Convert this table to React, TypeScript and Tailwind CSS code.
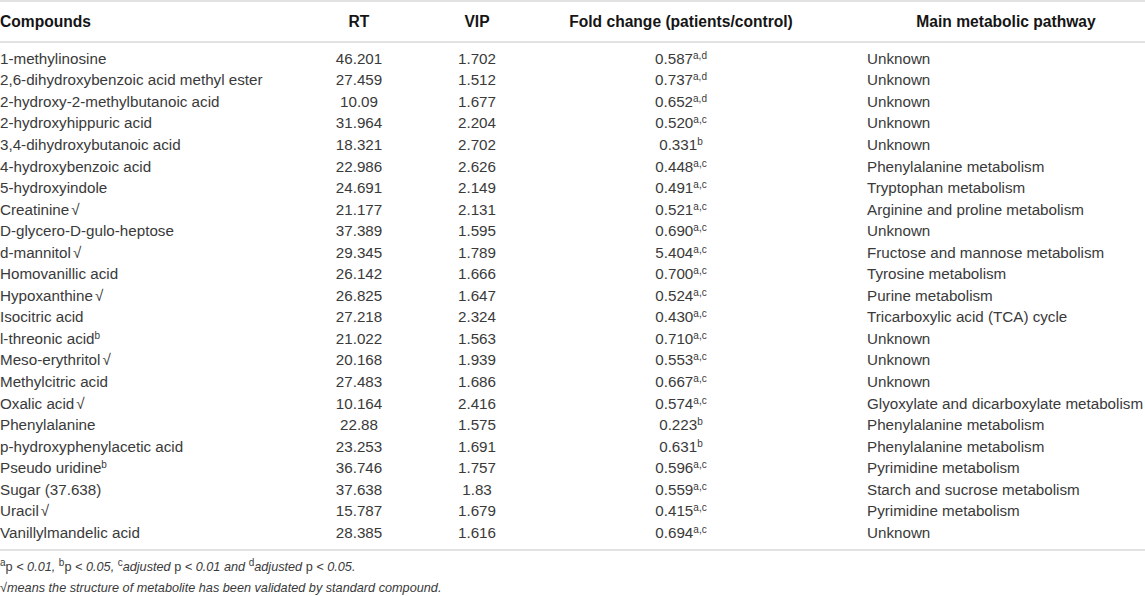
type Row = {
  name: string;
  mark?: "check" | "b";
  rt: string;
  vip: string;
  fold: string;
  sup: string;
  pathway: string;
};

const ROWS: Row[] = [
  { name: "1-methylinosine", rt: "46.201", vip: "1.702", fold: "0.587", sup: "a,d", pathway: "Unknown" },
  { name: "2,6-dihydroxybenzoic acid methyl ester", rt: "27.459", vip: "1.512", fold: "0.737", sup: "a,d", pathway: "Unknown" },
  { name: "2-hydroxy-2-methylbutanoic acid", rt: "10.09", vip: "1.677", fold: "0.652", sup: "a,d", pathway: "Unknown" },
  { name: "2-hydroxyhippuric acid", rt: "31.964", vip: "2.204", fold: "0.520", sup: "a,c", pathway: "Unknown" },
  { name: "3,4-dihydroxybutanoic acid", rt: "18.321", vip: "2.702", fold: "0.331", sup: "b", pathway: "Unknown" },
  { name: "4-hydroxybenzoic acid", rt: "22.986", vip: "2.626", fold: "0.448", sup: "a,c", pathway: "Phenylalanine metabolism" },
  { name: "5-hydroxyindole", rt: "24.691", vip: "2.149", fold: "0.491", sup: "a,c", pathway: "Tryptophan metabolism" },
  { name: "Creatinine", mark: "check", rt: "21.177", vip: "2.131", fold: "0.521", sup: "a,c", pathway: "Arginine and proline metabolism" },
  { name: "D-glycero-D-gulo-heptose", rt: "37.389", vip: "1.595", fold: "0.690", sup: "a,c", pathway: "Unknown" },
  { name: "d-mannitol", mark: "check", rt: "29.345", vip: "1.789", fold: "5.404", sup: "a,c", pathway: "Fructose and mannose metabolism" },
  { name: "Homovanillic acid", rt: "26.142", vip: "1.666", fold: "0.700", sup: "a,c", pathway: "Tyrosine metabolism" },
  { name: "Hypoxanthine", mark: "check", rt: "26.825", vip: "1.647", fold: "0.524", sup: "a,c", pathway: "Purine metabolism" },
  { name: "Isocitric acid", rt: "27.218", vip: "2.324", fold: "0.430", sup: "a,c", pathway: "Tricarboxylic acid (TCA) cycle" },
  { name: "l-threonic acid", mark: "b", rt: "21.022", vip: "1.563", fold: "0.710", sup: "a,c", pathway: "Unknown" },
  { name: "Meso-erythritol", mark: "check", rt: "20.168", vip: "1.939", fold: "0.553", sup: "a,c", pathway: "Unknown" },
  { name: "Methylcitric acid", rt: "27.483", vip: "1.686", fold: "0.667", sup: "a,c", pathway: "Unknown" },
  { name: "Oxalic acid", mark: "check", rt: "10.164", vip: "2.416", fold: "0.574", sup: "a,c", pathway: "Glyoxylate and dicarboxylate metabolism" },
  { name: "Phenylalanine", rt: "22.88", vip: "1.575", fold: "0.223", sup: "b", pathway: "Phenylalanine metabolism" },
  { name: "p-hydroxyphenylacetic acid", rt: "23.253", vip: "1.691", fold: "0.631", sup: "b", pathway: "Phenylalanine metabolism" },
  { name: "Pseudo uridine", mark: "b", rt: "36.746", vip: "1.757", fold: "0.596", sup: "a,c", pathway: "Pyrimidine metabolism" },
  { name: "Sugar (37.638)", rt: "37.638", vip: "1.83", fold: "0.559", sup: "a,c", pathway: "Starch and sucrose metabolism" },
  { name: "Uracil", mark: "check", rt: "15.787", vip: "1.679", fold: "0.415", sup: "a,c", pathway: "Pyrimidine metabolism" },
  { name: "Vanillylmandelic acid", rt: "28.385", vip: "1.616", fold: "0.694", sup: "a,c", pathway: "Unknown" },
];

function Sup({ children }: { children: string }) {
  return <sup className="top-[-0.5em] text-[10px] leading-none">{children}</sup>;
}

export default function App() {
  return (
    <div className="w-[1145px] bg-white font-['Liberation_Sans',Arial,sans-serif] text-[15.2px] text-[#3a3a3a]">
      <table className="w-full table-fixed border-collapse">
        <colgroup>
          <col className="w-[300px]" />
          <col className="w-[118px]" />
          <col className="w-[118px]" />
          <col className="w-[290px]" />
          <col />
        </colgroup>
        <thead>
          <tr className="h-[41px] border-y-2 border-[#e2e2e2] text-[15.6px] leading-[18px] text-[#151515]">
            <th className="text-left font-bold">Compounds</th>
            <th className="text-center font-bold">RT</th>
            <th className="text-center font-bold">VIP</th>
            <th className="text-center font-bold">Fold change (patients/control)</th>
            <th className="pl-[41px] text-center font-bold">Main metabolic pathway</th>
          </tr>
        </thead>
        <tbody className="border-b-2 border-[#e2e2e2]">
          <tr className="h-[6px]"><td colSpan={5} /></tr>
          {ROWS.map((r) => (
            <tr key={r.name} className="h-[21.55px] leading-[18px]">
              <td className="whitespace-nowrap p-0 text-left">
                {r.name}
                {r.mark === "check" ? <span className="ml-[2px]">√</span> : null}
                {r.mark === "b" ? <Sup>b</Sup> : null}
              </td>
              <td className="p-0 text-center">{r.rt}</td>
              <td className="p-0 text-center">{r.vip}</td>
              <td className="p-0 text-center">
                {r.fold}
                <Sup>{r.sup}</Sup>
              </td>
              <td className="whitespace-nowrap py-0 pl-[41px] text-left">{r.pathway}</td>
            </tr>
          ))}
          <tr className="h-[6px]"><td colSpan={5} /></tr>
        </tbody>
      </table>
      <div className="pt-[6px] text-[12.7px] leading-[21px]">
        <p>
          <Sup>a</Sup>p <i>&lt; 0.01, </i>
          <Sup>b</Sup>p <i>&lt; 0.05, </i>
          <Sup>c</Sup>
          <i>adjusted </i>p <i>&lt; 0.01 and </i>
          <Sup>d</Sup>
          <i>adjusted </i>p <i>&lt; 0.05.</i>
        </p>
        <p>
          √<i>means the structure of metabolite has been validated by standard compound.</i>
        </p>
      </div>
    </div>
  );
}
